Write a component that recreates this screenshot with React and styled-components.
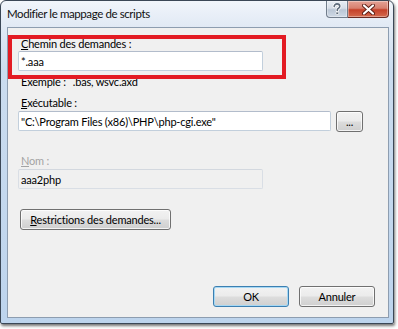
import React from 'react';
import styled, { createGlobalStyle } from 'styled-components';

const Global = createGlobalStyle`
  html, body { margin: 0; padding: 0; background: #ffffff; }
  body { font-family: "Segoe UI", Lato, "Noto Sans", sans-serif; }
  * { box-sizing: border-box; }
`;

const Page = styled.div`
  position: relative;
  width: 398px;
  height: 329px;
  overflow: hidden;
  background: #fff;
`;

const Window = styled.div`
  width: 394px;
  height: 324px;
  border: 1px solid #3b4756;
  border-radius: 6px 6px 2px 2px;
  background: linear-gradient(180deg, #f1f5fb 0px, #e2eaf5 24px, #cbdcef 70px, #bdd4ed 100%);
  box-shadow: 1px 2px 3px rgba(0, 0, 0, 0.55);
  display: flex;
  flex-direction: column;
`;

const TitleBar = styled.div`
  height: 26px;
  display: flex;
  align-items: flex-start;
  flex: none;
`;

const Title = styled.div`
  padding: 5px 0 0 6px;
  font-size: 11.5px;
  letter-spacing: -0.4px;
  line-height: 15px;
  color: #111;
`;

const Caption = styled.div`
  margin-left: auto;
  margin-right: 4px;
  display: flex;
`;

const CapButton = styled.div`
  height: 17px;
  width: ${p => p.$w}px;
  display: flex;
  align-items: center;
  justify-content: center;
  border: 1px solid ${p => (p.$close ? '#6b2a22' : '#717d8c')};
  border-top: none;
  border-left-width: ${p => (p.$close ? 0 : 1)}px;
  border-radius: ${p => (p.$close ? '0 0 4px 0' : '0 0 0 4px')};
  background: ${p =>
    p.$close
      ? 'linear-gradient(180deg, #e4a296 0%, #d8806f 45%, #c5412a 55%, #d46a4e 100%)'
      : 'linear-gradient(180deg, #e7edf4 0%, #d5dde8 45%, #bac6d5 55%, #cfd9e6 100%)'};
  box-shadow: inset 0 0 0 1px rgba(255, 255, 255, 0.35);
`;

const Client = styled.div`
  flex: 1;
  margin: 0 4px 5px 6px;
  border: 1px solid #8d9db0;
  background: #f0f0f0;
  padding: 8px 13px 10px 10px;
  display: flex;
  flex-direction: column;
  font-size: 11px;
  letter-spacing: -0.2px;
  line-height: 15px;
  color: #000;
`;

const Label = styled.div`
  padding-left: 3px;
  margin-top: ${p => p.$mt || 0}px;
  color: ${p => (p.$disabled ? '#a3a3a3' : '#000')};
  white-space: nowrap;
`;

const Key = styled.span`
  text-decoration: underline;
  text-underline-offset: 1px;
`;

const Input = styled.div`
  width: ${p => p.$w}px;
  height: 20px;
  flex: none;
  border: 1px solid ${p => (p.$disabled ? '#d9dee5' : '#c2cfdc')};
  border-top-color: ${p => (p.$disabled ? '#d3d8df' : '#b2bccb')};
  border-radius: 2px;
  background: ${p => (p.$disabled ? '#f0f0f0' : '#ffffff')};
  padding: 2px 0 0 2px;
  line-height: 15px;
  white-space: nowrap;
  overflow: hidden;
  color: #000;
`;

const Example = styled.div`
  margin-top: 3px;
  padding-left: 3px;
  color: #000;
  white-space: nowrap;
  display: flex;
  gap: 7px;
`;

const Row = styled.div`
  display: flex;
  align-items: flex-start;
  gap: 5px;
  margin-top: 1px;
`;

const Button = styled.div`
  width: ${p => p.$w}px;
  height: 21px;
  flex: none;
  display: flex;
  align-items: center;
  justify-content: center;
  border: 1px solid ${p => (p.$default ? '#3c7fb1' : '#707070')};
  border-radius: 3px;
  background: linear-gradient(180deg, #f2f2f2 0%, #ebebeb 49%, #dddddd 51%, #cfcfcf 100%);
  box-shadow: inset 0 0 0 1px ${p => (p.$default ? '#a6d8f4' : 'rgba(255,255,255,0.75)')};
  color: #000;
  white-space: nowrap;
  margin-top: ${p => p.$mt || 0}px;
  margin-left: ${p => p.$ml || 0}px;
`;

const Footer = styled.div`
  margin-top: auto;
  display: flex;
  justify-content: flex-end;
  gap: 10px;
`;

const Highlight = styled.div`
  position: absolute;
  left: 8px;
  top: 35px;
  width: 278px;
  height: 44px;
  border: 4px solid #e31b23;
  pointer-events: none;
`;

const HelpIcon = () => (
  <svg width="10" height="12" viewBox="0 0 10 12">
    <path
      d="M2.2 3.6 C2.2 1.6 3.6 0.9 5 0.9 C6.7 0.9 7.8 1.9 7.8 3.3 C7.8 4.8 6.2 5.3 5.6 6.1 C5.3 6.5 5.3 7 5.3 7.6"
      fill="none"
      stroke="#ffffff"
      strokeWidth="3.2"
      strokeLinecap="round"
    />
    <path
      d="M2.2 3.6 C2.2 1.6 3.6 0.9 5 0.9 C6.7 0.9 7.8 1.9 7.8 3.3 C7.8 4.8 6.2 5.3 5.6 6.1 C5.3 6.5 5.3 7 5.3 7.6"
      fill="none"
      stroke="#5d6b7c"
      strokeWidth="1.6"
      strokeLinecap="round"
    />
    <rect x="3.9" y="9" width="2.8" height="2.6" rx="0.6" fill="#5d6b7c" stroke="#fff" strokeWidth="0.8" />
  </svg>
);

const CloseIcon = () => (
  <svg width="13" height="11" viewBox="0 0 13 11">
    <path d="M2 1.5 L11 9.5 M11 1.5 L2 9.5" stroke="#5a1c14" strokeWidth="4" strokeLinecap="round" />
    <path d="M2 1.5 L11 9.5 M11 1.5 L2 9.5" stroke="#ffffff" strokeWidth="2.2" strokeLinecap="round" />
  </svg>
);

export default function App() {
  return (
    <>
      <Global />
      <Page>
        <Window>
          <TitleBar>
            <Title>Modifier le mappage de scripts</Title>
            <Caption>
              <CapButton $w={22}>
                <HelpIcon />
              </CapButton>
              <CapButton $w={41} $close>
                <CloseIcon />
              </CapButton>
            </Caption>
          </TitleBar>
          <Client>
            <Label>
              <Key>C</Key>hemin des demandes :
            </Label>
            <Input $w={245}>*.aaa</Input>
            <Example>
              <span>Exemple :</span>
              <span>.bas, wsvc.axd</span>
            </Example>
            <Label $mt={6}>
              <Key>E</Key>xécutable :
            </Label>
            <Row>
              <Input $w={313}>"C:\Program Files (x86)\PHP\php-cgi.exe"</Input>
              <Button $w={27}>...</Button>
            </Row>
            <Label $mt={21} $disabled>
              <Key>N</Key>om :
            </Label>
            <Row>
              <Input $w={245} $disabled>aaa2php</Input>
            </Row>
            <Button $w={151} $mt={20} $ml={2}>
              <span>
                <Key>R</Key>estrictions des demandes...
              </span>
            </Button>
            <Footer>
              <Button $w={76} $default>OK</Button>
              <Button $w={76}>Annuler</Button>
            </Footer>
          </Client>
        </Window>
        <Highlight />
      </Page>
    </>
  );
}
